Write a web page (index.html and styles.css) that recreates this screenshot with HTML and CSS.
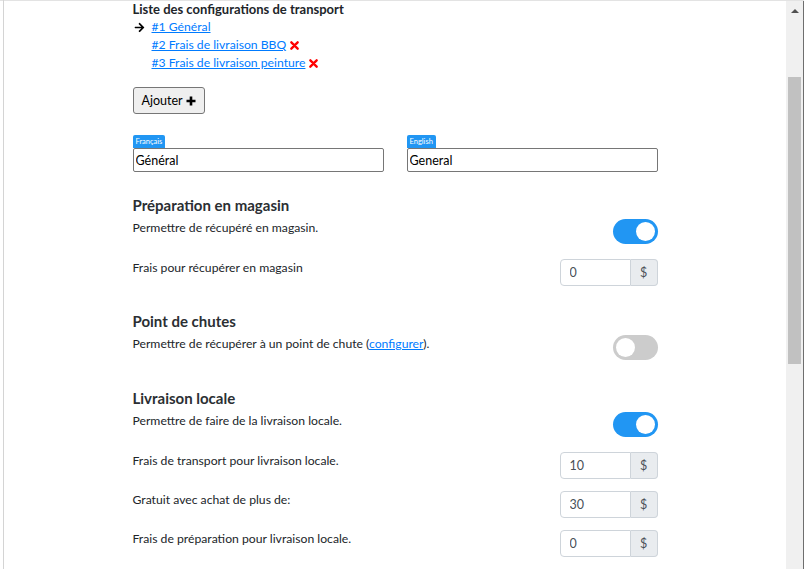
FILE: index.html
```html
<!DOCTYPE html>
<html lang="fr">
<head>
<meta charset="utf-8">
<title>Configurations de transport</title>
<link rel="stylesheet" href="styles.css">
</head>
<body>
<div class="window">
  <main class="viewport">
    <div class="container">
      <div class="list-title">Liste des configurations de transport</div>
      <ul class="config-list">
        <li class="config-item">
          <span class="marker"><svg width="11" height="11" viewBox="0 0 448 512"><path fill="#000" d="M190.5 66.9l22.2-22.2c9.4-9.4 24.6-9.4 33.9 0L441 239c9.4 9.4 9.4 24.6 0 33.9L246.6 467.3c-9.4 9.4-24.6 9.4-33.9 0l-22.2-22.2c-9.5-9.5-9.300-25 .4-34.3L311.4 296H24c-13.3 0-24-10.7-24-24v-32c0-13.3 10.7-24 24-24h287.4L190.9 101.2c-9.8-9.3-10-24.8-.4-34.3z"/></svg></span>
          <a href="#" class="config-link">#1 Général</a>
        </li>
        <li class="config-item">
          <span class="marker"></span>
          <a href="#" class="config-link">#2 Frais de livraison BBQ</a>
          <span class="remove"><svg width="9" height="9" viewBox="0 0 10 10"><path d="M1.5 1.5l7 7M8.5 1.5l-7 7" stroke="#ff0000" stroke-width="2.6" stroke-linecap="round"/></svg></span>
        </li>
        <li class="config-item">
          <span class="marker"></span>
          <a href="#" class="config-link">#3 Frais de livraison peinture</a>
          <span class="remove"><svg width="9" height="9" viewBox="0 0 10 10"><path d="M1.5 1.5l7 7M8.5 1.5l-7 7" stroke="#ff0000" stroke-width="2.6" stroke-linecap="round"/></svg></span>
        </li>
      </ul>
      <button class="add-btn" type="button">Ajouter<svg width="10" height="10" viewBox="0 0 10 10"><path d="M5 0.5v9M0.5 5h9" stroke="#000" stroke-width="2.6"/></svg></button>

      <div class="lang-row">
        <div class="lang-field">
          <span class="lang-badge">Français</span>
          <input class="lang-input" type="text" value="Général">
        </div>
        <div class="lang-field">
          <span class="lang-badge">English</span>
          <input class="lang-input" type="text" value="General">
        </div>
      </div>

      <section class="section">
        <h2 class="section-title">Préparation en magasin</h2>
        <div class="row row-toggle">
          <span class="row-label">Permettre de récupéré en magasin.</span>
          <span class="switch on"><span class="knob"></span></span>
        </div>
        <div class="row">
          <span class="row-label">Frais pour récupérer en magasin</span>
          <span class="money"><input class="money-input" type="text" value="0"><span class="money-addon">$</span></span>
        </div>
      </section>

      <section class="section">
        <h2 class="section-title">Point de chutes</h2>
        <div class="row row-toggle">
          <span class="row-label">Permettre de récupérer à un point de chute (<a href="#" class="inline-link">configurer</a>).</span>
          <span class="switch off"><span class="knob"></span></span>
        </div>
      </section>

      <section class="section">
        <h2 class="section-title">Livraison locale</h2>
        <div class="row row-toggle">
          <span class="row-label">Permettre de faire de la livraison locale.</span>
          <span class="switch on"><span class="knob"></span></span>
        </div>
        <div class="row">
          <span class="row-label">Frais de transport pour livraison locale.</span>
          <span class="money"><input class="money-input" type="text" value="10"><span class="money-addon">$</span></span>
        </div>
        <div class="row">
          <span class="row-label">Gratuit avec achat de plus de:</span>
          <span class="money"><input class="money-input" type="text" value="30"><span class="money-addon">$</span></span>
        </div>
        <div class="row">
          <span class="row-label">Frais de préparation pour livraison locale.</span>
          <span class="money"><input class="money-input" type="text" value="0"><span class="money-addon">$</span></span>
        </div>
      </section>
    </div>
  </main>
  <aside class="scrollbar">
    <span class="scroll-arrow"></span>
    <span class="scroll-thumb"></span>
  </aside>
</div>
</body>
</html>
```

FILE: styles.css
```css
html, body {
  margin: 0;
  padding: 0;
  height: 100%;
  overflow: hidden;
  background: #fff;
}

body {
  font-family: "Lato", "Noto Sans", sans-serif;
  font-size: 12.2px;
  color: #212529;
}

.window {
  display: flex;
  height: 569px;
  box-sizing: border-box;
  border-top: 1px solid #e3e3e3;
  padding-left: 3px;
}

.viewport {
  flex: 1;
  border-left: 1px solid #d4d4d4;
  overflow: hidden;
  margin-top: -1px;
}

.container {
  width: 525px;
  margin: 0 auto;
  display: flex;
  flex-direction: column;
}

.list-title {
  font-weight: 700;
  font-size: 13px;
  line-height: 18px;
  color: #212529;
}

.config-list {
  list-style: none;
  margin: 0;
  padding: 0;
}

.config-item {
  display: flex;
  align-items: center;
  height: 18px;
  line-height: 18px;
}

.marker {
  width: 18px;
  display: flex;
  align-items: center;
  padding-left: 1px;
}

.config-link,
.inline-link {
  color: #007bff;
  text-decoration: underline;
}

.remove {
  display: flex;
  align-items: center;
  margin-left: 4px;
}

.add-btn {
  align-self: flex-start;
  margin-top: 15px;
  height: 27px;
  width: 72px;
  padding: 0;
  font-family: inherit;
  font-size: 12.5px;
  color: #000;
  background: #efefef;
  border: 1px solid #767676;
  border-radius: 3px;
  display: flex;
  align-items: center;
  justify-content: center;
  gap: 3px;
}

.lang-row {
  display: grid;
  grid-template-columns: 251px 251px;
  column-gap: 23px;
  margin-top: 21px;
  margin-bottom: 10px;
}

.lang-field {
  display: flex;
  flex-direction: column;
  align-items: flex-start;
}

.lang-badge {
  background: #2196f3;
  color: #fff;
  font-size: 7.5px;
  line-height: 13px;
  height: 13px;
  padding: 0 3px;
  border-radius: 2px 2px 0 0;
}

.lang-input {
  box-sizing: border-box;
  width: 251px;
  height: 24px;
  margin: 0;
  padding: 0 2px;
  font-family: inherit;
  font-size: 12.5px;
  color: #000;
  border: 1px solid #767676;
  border-radius: 2px;
}

.section {
  margin-top: 13px;
  display: flex;
  flex-direction: column;
}

.section-title {
  margin: 0 0 4px;
  font-size: 15px;
  font-weight: 700;
  line-height: 20px;
  color: #2b2f33;
}

.row {
  display: flex;
  justify-content: space-between;
  align-items: flex-start;
  min-height: 27px;
  margin-bottom: 12px;
}

.row-toggle {
  min-height: 28px;
}

.row-label {
  line-height: 18px;
}

.switch {
  width: 45px;
  height: 25px;
  border-radius: 13px;
  box-sizing: border-box;
  display: flex;
  align-items: center;
  padding: 0 3px;
}

.switch.on {
  background: #2196f3;
  justify-content: flex-end;
}

.switch.off {
  background: #cccccc;
  justify-content: flex-start;
}

.knob {
  width: 19px;
  height: 19px;
  border-radius: 50%;
  background: #fff;
}

.money {
  display: flex;
  height: 27px;
}

.money-input {
  box-sizing: border-box;
  width: 71px;
  height: 27px;
  margin: 0;
  padding: 0 9px;
  font-family: inherit;
  font-size: 12.5px;
  color: #495057;
  border: 1px solid #ced4da;
  border-radius: 4px 0 0 4px;
}

.money-addon {
  box-sizing: border-box;
  width: 27px;
  height: 27px;
  display: flex;
  align-items: center;
  justify-content: center;
  background: #e9ecef;
  color: #495057;
  font-size: 12.5px;
  border: 1px solid #ced4da;
  border-left: 0;
  border-radius: 0 4px 4px 0;
}

.scrollbar {
  width: 17px;
  flex: none;
  background: #f0f0f0;
  border-right: 1px solid #6e6e6e;
  display: flex;
  flex-direction: column;
  align-items: center;
}

.scroll-arrow {
  margin-top: 8px;
  width: 0;
  height: 0;
  border-left: 4px solid transparent;
  border-right: 4px solid transparent;
  border-bottom: 4px solid #505050;
}

.scroll-thumb {
  margin-top: 64px;
  width: 13px;
  height: 287px;
  background: #c1c1c1;
}
```
